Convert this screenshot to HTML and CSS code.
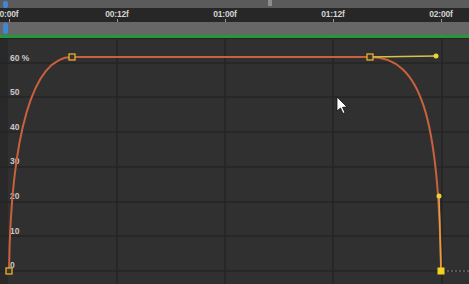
FILE: index.html
```html
<!DOCTYPE html>
<html lang="en">
<head>
    <meta charset="UTF-8">
    <title>Graph Editor</title>
    <link rel="stylesheet" href="styles.css">
</head>
<body>
    <div class="editor">
        <div class="top-bar">
            <span class="handle small"></span>
            <span class="notch"></span>
        </div>
        <div class="ruler">
            <span class="mark">0:00f</span>
            <span class="mark">00:12f</span>
            <span class="mark">01:00f</span>
            <span class="mark">01:12f</span>
            <span class="mark">02:00f</span>
        </div>
        <div class="work-bar">
            <span class="handle"></span>
        </div>
        <div class="green-line"></div>
        <svg class="graph" width="469" height="246" viewBox="0 0 469 246">
            <rect x="0" y="0" width="469" height="246" fill="#303030"/>
            <rect x="0" y="0" width="8" height="246" fill="#292929"/>
            <line x1="0" y1="0.5" x2="469" y2="0.5" stroke="#222" stroke-width="1"/>
            <!-- grid -->
            <g stroke="#252525" stroke-width="1.5">
                <line x1="0" y1="25" x2="469" y2="25"/>
                <line x1="0" y1="59" x2="469" y2="59"/>
                <line x1="0" y1="94" x2="469" y2="94"/>
                <line x1="0" y1="129" x2="469" y2="129"/>
                <line x1="0" y1="164" x2="469" y2="164"/>
                <line x1="0" y1="198" x2="469" y2="198"/>
                <line x1="0" y1="233" x2="469" y2="233"/>
                <line x1="117" y1="0" x2="117" y2="246"/>
                <line x1="225" y1="0" x2="225" y2="246"/>
                <line x1="333" y1="0" x2="333" y2="246"/>
                <line x1="442" y1="0" x2="442" y2="246"/>
            </g>
            <g class="axis">
                <text x="10" y="23">60 %</text>
                <text x="10" y="57">50</text>
                <text x="10" y="92">40</text>
                <text x="10" y="126">30</text>
                <text x="10" y="161">20</text>
                <text x="10" y="196">10</text>
                <text x="10" y="230">0</text>
            </g>
            <!-- speed curve -->
            <path d="M9,233 C11,95 33,19 72,19 L370,19 C421,19 439,80 441,233" fill="none" stroke="#c9623c" stroke-width="2"/>
            <!-- handles -->
            <g stroke="#d9c24a" stroke-width="1.5">
                <line x1="370" y1="19" x2="436" y2="18"/>
                <line x1="441" y1="233" x2="439" y2="158" stroke="#e0a040"/>
            </g>
            <circle cx="436" cy="18" r="2.5" fill="#ecd33a"/>
            <circle cx="439" cy="158" r="2.5" fill="#ecd33a"/>
            <line x1="447" y1="233" x2="469" y2="233" stroke="#8a8a8a" stroke-width="1" stroke-dasharray="2 2"/>
            <!-- keyframes -->
            <g fill="#3a3430" stroke="#e8b032" stroke-width="1.3">
                <rect x="69" y="16" width="6" height="6"/>
                <rect x="367" y="16" width="6" height="6"/>
                <rect x="6" y="230" width="6" height="6"/>
            </g>
            <rect x="437.5" y="229.5" width="7" height="7" fill="#f2d21e"/>
            <!-- mouse pointer -->
            <path d="M337,59 L337,73 L340.5,70 L343,75.5 L345,74.5 L342.5,69.3 L347,69 Z" fill="#ffffff" stroke="#111" stroke-width="0.8"/>
        </svg>
    </div>
</body>
</html>
```

FILE: styles.css
```css
body {
    margin: 0;
    background: #303030;
    font-family: 'Liberation Sans', Arial, sans-serif;
}
.editor {
    width: 469px;
    height: 284px;
    overflow: hidden;
    display: flex;
    flex-direction: column;
}
.editor > * {
    flex-shrink: 0;
}
.top-bar {
    height: 8px;
    background: #5b5b5b;
    display: flex;
    align-items: flex-start;
    padding-left: 3px;
}
.handle {
    display: block;
    width: 5px;
    height: 11px;
    margin-top: 1px;
    background: #3f86d6;
    border-radius: 2px;
}
.handle.small {
    height: 7px;
}
.notch {
    display: block;
    width: 4px;
    height: 6px;
    margin-left: 260px;
    background: #8c8c8c;
}
.ruler {
    height: 14px;
    background: #272727;
    display: flex;
    margin-left: -45px;
}
.mark {
    flex: 0 0 108px;
    position: relative;
    text-align: center;
    color: #d4d4d4;
    font-size: 8.5px;
    font-weight: bold;
    line-height: 12px;
    letter-spacing: -0.2px;
}
.mark::after {
    content: "";
    position: absolute;
    left: 54px;
    bottom: 0;
    width: 1px;
    height: 3px;
    background: #9a9a9a;
}
.work-bar {
    height: 13px;
    background: #676767;
    padding-left: 3px;
}
.green-line {
    height: 3px;
    background: #229a3c;
}
.graph {
    display: block;
}
.axis text {
    fill: #c8c8c8;
    font-size: 8.5px;
    font-weight: bold;
    font-family: 'Liberation Sans', Arial, sans-serif;
}
```
